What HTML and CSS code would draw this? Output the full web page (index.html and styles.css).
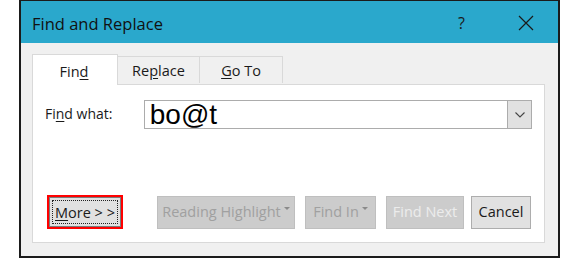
FILE: index.html
```html
<!DOCTYPE html>
<html>
<head>
<meta charset="utf-8">
<link rel="stylesheet" href="styles.css">
</head>
<body>
<div class="dialog">
  <div class="titlebar">
    <span class="title">Find and Replace</span>
    <span class="help">?</span>
    <span class="close"><svg width="16" height="16" viewBox="0 0 16 16"><path d="M1 1 L15 15 M15 1 L1 15" stroke="#1a1a1a" stroke-width="1.2" fill="none"/></svg></span>
  </div>
  <div class="body">
    <div class="tabs">
      <div class="tab active">Fin<u>d</u></div>
      <div class="tab tab-replace">Re<u>p</u>lace</div>
      <div class="tab tab-goto"><u>G</u>o To</div>
    </div>
    <div class="panel">
      <div class="row">
        <div class="label">Fi<u>n</u>d what:</div>
        <div class="combo">
          <div class="combo-text">bo@t</div>
          <div class="combo-btn"><svg width="12" height="8" viewBox="0 0 12 8"><path d="M1.5 1.5 L6 6 L10.5 1.5" stroke="#444" stroke-width="1.1" fill="none"/></svg></div>
        </div>
      </div>
      <div class="buttons">
        <div class="more-wrap"><div class="btn more"><span class="focus"><u>M</u>ore &gt; &gt;</span></div></div>
        <div class="btn disabled reading">Reading Highlight<span class="caret"></span></div>
        <div class="btn disabled findin">Find In<span class="caret"></span></div>
        <div class="btn disabled findnext">Find Next</div>
        <div class="btn cancel">Cancel</div>
      </div>
    </div>
  </div>
</div>
</body>
</html>
```

FILE: styles.css
```css
html, body {
  margin: 0;
  padding: 0;
  background: #ffffff;
}
body {
  font-family: "Open Sans", "Noto Sans", sans-serif;
  color: #1a1a1a;
}
.dialog {
  margin-left: 19px;
  width: 537px;
  height: 255px;
  border: 1px solid #1b1b1b;
  border-left-width: 2px;
  border-right-width: 2px;
  border-bottom-width: 2px;
  background: #f0f0f0;
  display: flex;
  flex-direction: column;
}
.titlebar {
  height: 42px;
  box-sizing: border-box;
  padding-top: 4px;
  background: #2aa8cc;
  display: flex;
  align-items: center;
  padding-left: 11px;
  flex: none;
}
.title {
  font-size: 16.5px;
  color: #111;
  flex: 1;
  padding-bottom: 1px;
}
.help {
  font-size: 16px;
  color: #1a1a1a;
  margin-right: 53px;
  padding-bottom: 2px;
}
.close {
  width: 16px;
  height: 16px;
  margin-right: 24px;
  display: flex;
  margin-bottom: 3px;
}
.body {
  flex: 1;
  padding: 11px 13px 13px 11px;
  display: flex;
  flex-direction: column;
}
.tabs {
  display: flex;
  height: 30px;
  align-items: flex-end;
  position: relative;
  z-index: 1;
  flex: none;
}
.tab {
  height: 27px;
  border: 1px solid #d9d9d9;
  border-bottom: none;
  background: #f0f0f0;
  font-size: 14.5px;
  display: flex;
  align-items: center;
  justify-content: center;
  box-sizing: border-box;
  margin-bottom: 1px;
  margin-left: -1px;
}
.tab.active {
  height: 31px;
  width: 86px;
  margin-left: 0;
  background: #fff;
  margin-bottom: -1px;
  padding-top: 2px;
  padding-right: 2px;
}
.tab-replace {
  width: 82px;
  border-left: none;
  margin-left: 0;
}
.tab-goto {
  width: 84px;
}
.tab u, .label u, .more u {
  text-decoration-thickness: 1px;
  text-underline-offset: 2px;
}
.panel {
  flex: 1;
  background: #fff;
  border: 1px solid #d9d9d9;
  display: flex;
  flex-direction: column;
  padding: 15px 12px 13px 14px;
}
.row {
  display: flex;
  align-items: center;
  height: 29px;
}
.label {
  font-size: 14px;
  width: 99px;
  margin-left: -2px;
  padding-bottom: 2px;
}
.combo {
  width: 389px;
  height: 29px;
  box-sizing: border-box;
  border: 1px solid #acacac;
  display: flex;
  background: #fff;
}
.combo-text {
  flex: 1;
  font-family: "Liberation Sans", Arial, sans-serif;
  font-size: 28px;
  line-height: 27px;
  padding-left: 5px;
  color: #000;
}
.combo-btn {
  width: 23px;
  background: #e1e1e1;
  border-left: 1px solid #acacac;
  display: flex;
  align-items: center;
  justify-content: center;
}
.buttons {
  margin-top: auto;
  display: flex;
  align-items: center;
}
.btn {
  height: 33px;
  box-sizing: border-box;
  border: 1px solid #adadad;
  background: #e1e1e1;
  font-size: 14.5px;
  display: flex;
  align-items: center;
  justify-content: center;
  padding-bottom: 1px;
}
.more-wrap {
  border: 2px solid #ff0000;
  width: 76px;
  height: 34px;
  box-sizing: border-box;
  display: flex;
}
.btn.more {
  flex: 1;
  height: 30px;
  padding: 2px;
  border-color: #7a7a7a;
}
.focus {
  flex: 1;
  align-self: stretch;
  border: 1px dotted #222;
  display: flex;
  align-items: center;
  justify-content: center;
}
.btn.disabled {
  background: #cccccc;
  border-color: #bfbfbf;
  color: #a0a0a0;
}
.reading {
  width: 138px;
  margin-left: 34px;
}
.findin {
  width: 71px;
  margin-left: 10px;
}
.findnext {
  width: 78px;
  margin-left: 10px;
  color: #ececec !important;
}
.cancel {
  width: 60px;
  margin-left: 7px;
}
.caret {
  width: 0;
  height: 0;
  border-left: 3px solid transparent;
  border-right: 3px solid transparent;
  border-top: 3px solid #8a8a8a;
  margin-left: 3px;
  margin-bottom: 6px;
}
```
